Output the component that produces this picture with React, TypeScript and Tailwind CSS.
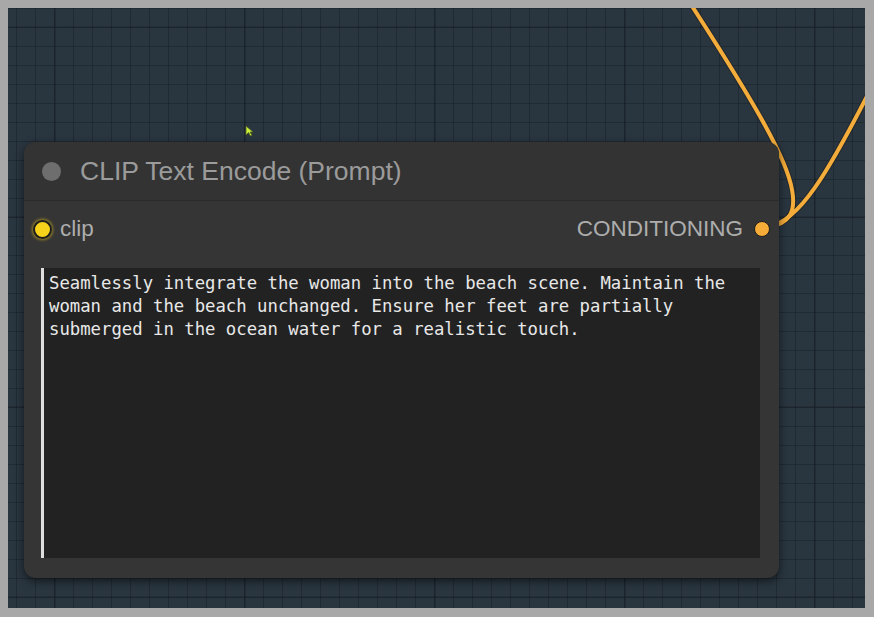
import React from "react";

const PROMPT =
  "Seamlessly integrate the woman into the beach scene. Maintain the woman and the beach unchanged. Ensure her feet are partially submerged in the ocean water for a realistic touch.";

function Wires() {
  return (
    <svg className="absolute inset-0 h-full w-full" viewBox="0 0 858 600" fill="none">
      {/* links leave the CONDITIONING output */}
      <g transform="translate(-8 -8)">
        <path
          d="M770 226 C 790 224, 797 212, 793 190 C 788 160, 760 110, 693 6"
          stroke="#1b1b1b"
          strokeWidth="6"
          strokeOpacity="0.45"
        />
        <path
          d="M770 226 C 800 222, 830 170, 868 96"
          stroke="#1b1b1b"
          strokeWidth="6"
          strokeOpacity="0.45"
        />
        <path
          d="M770 226 C 790 224, 797 212, 793 190 C 788 160, 760 110, 693 6"
          stroke="#f4ac3a"
          strokeWidth="4"
        />
        <path d="M770 226 C 800 222, 830 170, 868 96" stroke="#f4ac3a" strokeWidth="4" />
      </g>
    </svg>
  );
}

function Cursor() {
  return (
    <svg className="absolute left-[237px] top-[117px] h-[12px] w-[9px]" viewBox="0 0 9 12">
      <path d="M1 1 L1 10 L3.5 7.5 L5.5 11 L7 10.2 L5 7 L8 7 Z" fill="#c8f03c" stroke="#55621c" strokeWidth="0.8" />
    </svg>
  );
}

function Node() {
  return (
    <div className="absolute left-[16px] top-[134px] flex h-[436px] w-[755px] flex-col rounded-[12px] bg-[#353535] shadow-[0_3px_8px_rgba(0,0,0,0.55)]">
      {/* Title */}
      <div className="flex h-[59px] items-center border-b border-[#2b2b2b] bg-[#333333] rounded-t-[12px]">
        <span className="ml-[18px] h-[19px] w-[19px] rounded-full bg-[#6e6e6e]" />
        <span className="ml-[19px] text-[26.5px] leading-none text-[#9b9b9b] [font-family:'Liberation_Sans',Arial,sans-serif]">
          CLIP Text Encode (Prompt)
        </span>
      </div>

      {/* Slots */}
      <div className="mt-[3px] flex h-[50px] items-center justify-between [font-family:'Liberation_Sans',Arial,sans-serif]">
        <div className="flex items-center">
          <span className="ml-[9px] flex h-[19px] w-[19px] items-center justify-center rounded-full bg-[#f7d21b] border-2 border-[#1d1d1d] shadow-[0_0_3px_1px_rgba(247,210,27,0.55)]" />
          <span className="ml-[8px] text-[22.5px] leading-none text-[#adadad]">clip</span>
        </div>
        <div className="flex items-center">
          <span className="text-[22.5px] leading-none text-[#adadad]">CONDITIONING</span>
          <span className="ml-[11px] mr-[9px] h-[16px] w-[16px] rounded-full bg-[#f6ac39] border-[1.5px] border-[#1d1d1d]" />
        </div>
      </div>

      {/* Prompt text */}
      <div className="ml-[17px] mr-[19px] mt-[14px] h-[290px] border-l-[3px] border-[#dedede] bg-[#222222] pl-[5px] pr-[10px] pt-[4px]">
        <p className="whitespace-pre-wrap text-[17.3px] leading-[23px] text-[#e8e8e8] [font-family:'DejaVu_Sans_Mono','Liberation_Mono',monospace]">
          {PROMPT}
        </p>
      </div>
    </div>
  );
}

export default function App() {
  return (
    <div className="h-[617px] w-[874px] bg-[#a8a8a8] p-[8px] pr-[9px] pb-[9px]">
      <div className="relative h-full w-full overflow-hidden bg-[#29353f] bg-[linear-gradient(90deg,rgba(16,24,31,0.3)_2px,transparent_2px),linear-gradient(0deg,rgba(16,24,31,0.25)_2px,transparent_2px),linear-gradient(90deg,rgba(18,26,33,0.4)_1px,transparent_1px),linear-gradient(0deg,rgba(18,26,33,0.4)_1px,transparent_1px)] bg-[size:190px_190px,190px_190px,19px_19px,19px_19px] bg-[position:46px_0,0_20px,8px_0,0_1px]">
        <Cursor />
        <Wires />
        <Node />
      </div>
    </div>
  );
}
